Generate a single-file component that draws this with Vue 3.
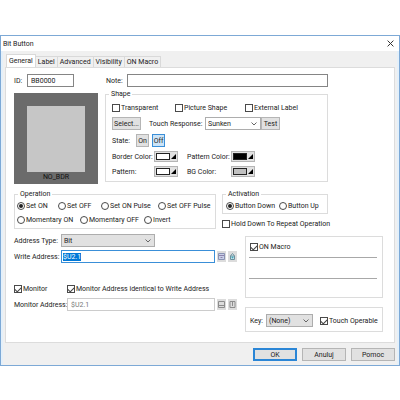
<script setup>
import { onMounted, ref } from 'vue'

const tabs = ['General', 'Label', 'Advanced', 'Visibility', 'ON Macro']
const activeTab = ref('General')
const operation = ref('Set ON')
const activation = ref('Button Down')
const state = ref('Off')
const operationRows = [
  ['Set ON', 'Set OFF', 'Set ON Pulse', 'Set OFF Pulse'],
  ['Momentary ON', 'Momentary OFF', 'Invert'],
]
const colorRows = [
  [{ label: 'Border Color:', tone: 'white' }, { label: 'Pattern Color:', tone: 'black' }],
  [{ label: 'Pattern:', tone: 'white' }, { label: 'BG Color:', tone: 'silver' }],
]
const writeAddress = ref(null)

onMounted(() => {
  writeAddress.value.focus()
  writeAddress.value.select()
})
</script>

<template>
  <main class="dialog">
    <header class="title-bar">
      <h1>Bit Button</h1>
      <button class="close" type="button" aria-label="Close">
        <svg viewBox="0 0 7 7"><path d="M.6.6 6.4 6.4M6.4.6.6 6.4" /></svg>
      </button>
    </header>

    <div class="content">
      <nav class="tabs">
        <button
          v-for="tab in tabs"
          :key="tab"
          type="button"
          class="tab"
          :class="{ active: tab === activeTab }"
          @click="activeTab = tab"
        >{{ tab }}</button>
      </nav>

      <section class="panel">
        <div class="identity">
          <label class="field id-field">ID:<input class="box" type="text" value="BB0000" /></label>
          <label class="field note-field">Note:<input class="box" type="text" /></label>
        </div>

        <div class="appearance">
          <div class="preview"><div class="face"></div><span>NO_BDR</span></div>
          <fieldset class="shape">
            <legend>Shape</legend>
            <div class="shape-rows">
              <div class="row checks">
                <label class="tick"><input type="checkbox" />Transparent</label>
                <label class="tick"><input type="checkbox" />Picture Shape</label>
                <label class="tick"><input type="checkbox" />External Label</label>
              </div>
              <div class="row response">
                <button class="btn select-btn" type="button">Select...</button>
                <label for="touch">Touch Response:</label>
                <div class="combo plain">
                  <select id="touch"><option>Sunken</option></select>
                  <svg viewBox="0 0 6 4"><path d="M.5.5 3 3 5.5.5" /></svg>
                </div>
                <button class="btn test-btn" type="button">Test</button>
              </div>
              <div class="row state">
                <span class="state-label">State:</span>
                <button
                  v-for="s in ['On', 'Off']"
                  :key="s"
                  type="button"
                  class="btn toggle"
                  :class="{ on: s === state }"
                  @click="state = s"
                >{{ s }}</button>
              </div>
              <div v-for="(row, i) in colorRows" :key="i" class="row colors">
                <template v-for="c in row" :key="c.label">
                  <span>{{ c.label }}</span>
                  <button class="btn swatch" type="button" :aria-label="c.label">
                    <i :class="c.tone"></i>
                    <svg viewBox="0 0 5 5"><path d="M5 0V5H0Z" /></svg>
                  </button>
                </template>
              </div>
            </div>
          </fieldset>
        </div>

        <div class="behaviour">
          <fieldset class="operation">
            <legend>Operation</legend>
            <div class="operation-rows">
              <div v-for="(row, i) in operationRows" :key="i" class="row radios" :class="'line-' + i">
                <label v-for="o in row" :key="o" class="tick">
                  <input v-model="operation" type="radio" name="operation" :value="o" />{{ o }}
                </label>
              </div>
            </div>
          </fieldset>
          <div class="activation-column">
            <fieldset class="activation">
              <legend>Activation</legend>
              <div class="row activation-row">
                <label v-for="a in ['Button Down', 'Button Up']" :key="a" class="tick">
                  <input v-model="activation" type="radio" name="activation" :value="a" />{{ a }}
                </label>
              </div>
            </fieldset>
            <label class="tick hold"><input type="checkbox" />Hold Down To Repeat Operation</label>
          </div>
        </div>

        <div class="lower">
          <div class="addresses">
            <div class="row address">
              <label for="type">Address Type:</label>
              <div class="combo type">
                <select id="type"><option>Bit</option></select>
                <svg viewBox="0 0 6 4"><path d="M.5.5 3 3 5.5.5" /></svg>
              </div>
            </div>
            <div class="row address">
              <label for="write">Write Address:</label>
              <input id="write" ref="writeAddress" class="box focused" type="text" value="$U2.1" />
              <button class="tool" type="button" aria-label="Keypad">
                <svg viewBox="0 0 9 11">
                  <path class="blue-face" d="M1.5 2.5h6v6h-6z" />
                  <path class="blue-line" d="M2 4.5h5M3.5 6.5h2" />
                </svg>
              </button>
              <button class="tool" type="button" aria-label="Tag">
                <svg viewBox="0 0 9 11">
                  <path class="teal-line" d="M2.5 5 4.5 2.5 6.5 5M2.5 5v3.5h4V5z" />
                  <path class="teal-face" d="M3.5 5.5h2v2h-2z" />
                </svg>
              </button>
            </div>
            <div class="row monitor">
              <label class="tick"><input type="checkbox" checked />Monitor</label>
              <label class="tick"><input type="checkbox" checked />Monitor Address identical to Write Address</label>
            </div>
            <div class="row address monitor-address">
              <label for="monitor">Monitor Address:</label>
              <input id="monitor" class="box" type="text" value="$U2.1" disabled />
              <button class="tool" type="button" aria-label="Monitor keypad" disabled>
                <svg viewBox="0 0 9 11">
                  <path class="gray-line" d="M1.5 2.5h6v6h-6zM2 6.5h5" />
                </svg>
              </button>
              <button class="tool" type="button" aria-label="Monitor tag" disabled>
                <svg viewBox="0 0 9 11">
                  <path class="gray-line" d="M2 2.5h5v6H2zM4.5 3v4" />
                </svg>
              </button>
            </div>
          </div>

          <div class="side">
            <div class="macro">
              <label class="tick"><input type="checkbox" checked />ON Macro</label>
              <hr /><hr />
            </div>
            <div class="key">
              <label for="key">Key:</label>
              <div class="combo key-combo">
                <select id="key"><option>(None)</option></select>
                <svg viewBox="0 0 6 4"><path d="M.5.5 3 3 5.5.5" /></svg>
              </div>
              <label class="tick"><input type="checkbox" checked />Touch Operable</label>
            </div>
          </div>
        </div>
      </section>

      <footer class="actions">
        <button class="btn default" type="button">OK</button>
        <button class="btn" type="button">Anuluj</button>
        <button class="btn" type="button">Pomoc</button>
      </footer>
    </div>
  </main>
</template>

<style>
body { background: #fff; }
</style>

<style scoped>
.dialog, .dialog * { box-sizing: border-box; }
.dialog {
  margin-top: 35px;
  border: 1px solid #7da9d6;
  background: #f0f0f0;
  color: #222;
  font: 7px/8px Roboto, "Liberation Sans", sans-serif;
  white-space: nowrap;
}
button, input, select { font: inherit; color: inherit; margin: 0; border-radius: 0; }
button { padding: 0; cursor: default; }
svg { display: block; fill: none; stroke: #333; }

.title-bar { display: flex; align-items: center; justify-content: space-between; height: 15px; padding: 0 5px 0 2px; background: #fff; }
h1 { margin: 0; font: inherit; }
.close { border: 0; background: none; }
.close svg { width: 7px; height: 7px; }

.content { border: solid #e4f0fa; border-width: 0 2px; }
.tabs { display: flex; align-items: flex-end; height: 16px; padding-left: 3px; }
.tab { height: 11px; padding: 0 2px; border: 1px solid #d9d9d9; border-width: 1px 1px 0 0; background: #f0f0f0; }
.tab.active { height: 13px; border-left-width: 1px; background: #fff; }

.panel { margin: 0 2px; padding: 6px 11px 10px 8px; border: 1px solid #dcdcdc; background: #fff; }
.field { display: flex; align-items: center; }
.identity { display: flex; padding-right: 55px; }
.id-field { width: 60px; justify-content: space-between; margin-right: 32px; }
.id-field .box { width: 47px; }
.note-field { flex: 1; gap: 4px; }
.note-field .box { flex: 1; }
.box { height: 13px; min-width: 0; padding: 0 3px; border: 1px solid #858585; background: #fff; outline: 0; }
.box:disabled { border-color: #ccc; color: #777; }
.focused { padding: 0 1px; border-color: #3a8fd8; }
.focused::selection { background: #0078d7; color: #fff; }

.appearance { display: flex; gap: 7px; margin-top: 3px; padding-right: 55px; }
.preview { display: flex; flex-direction: column; align-items: center; justify-content: space-between; width: 84px; height: 91px; margin-top: 3px; padding: 13px 0 3px; background: #6b6b6b; color: #111; }
.face { width: 58px; height: 66px; background: #c6c6c6; }

fieldset { min-width: 0; margin: 0; padding: 0; border: 1px solid #dcdcdc; }
legend { margin-left: 3px; padding: 0 2px; }
.row { display: flex; align-items: center; }
.shape { flex: 1; height: 92px; }
.shape-rows { display: flex; flex-direction: column; gap: 4px; padding: 5px 6px 4px; }
.checks { display: grid; grid-template-columns: 63px 70px 1fr; height: 10px; }

.tick { display: flex; align-items: center; gap: 1px; }
.tick input { appearance: none; display: grid; place-items: center; flex: none; width: 8px; height: 8px; border: 1px solid #4a4a4a; background: #fff; }
.tick input[type="radio"] { border-radius: 50%; }
.tick input[type="radio"]:checked::before { content: ""; width: 4px; height: 4px; border-radius: 50%; background: #222; }
.tick input[type="checkbox"]:checked::before { content: ""; width: 5px; height: 3px; border: solid #444; border-width: 0 0 1px 1px; transform: rotate(-45deg); }

.btn { height: 13px; border: 1px solid #b5b5b5; background: #e1e1e1; }
.select-btn { width: 29px; margin-right: 8px; }
.response label { width: 56px; }
.combo { display: flex; align-items: center; position: relative; height: 13px; border: 1px solid #adadad; background: #e1e1e1; }
.combo select { appearance: none; width: 100%; height: 11px; padding: 0 2px; border: 0; background: none; outline: 0; }
.combo svg { position: absolute; right: 3px; width: 6px; height: 4px; pointer-events: none; stroke: #666; }
.plain { width: 56px; background: #fff; }
.test-btn { width: 19px; }
.state-label { width: 24px; }
.toggle { width: 13px; margin-right: 3px; }
.toggle.on { border-color: #3a8fd8; background: #cce4f7; }
.colors { display: grid; grid-template-columns: 42px 33px 44px 24px; height: 11px; }
.swatch { display: flex; align-items: center; justify-content: space-between; width: 24px; height: 11px; padding: 0 1px; }
.swatch i { width: 14px; height: 7px; border: 1px solid #222; }
.white { background: #fff; }
.black { background: #000; }
.silver { background: #c0c0c0; }
.swatch svg { width: 5px; height: 5px; fill: #000; stroke: none; }

.behaviour { display: flex; gap: 6px; margin-top: 6px; }
.operation { width: 202px; height: 39px; }
.operation-rows { display: flex; flex-direction: column; gap: 4px; padding: 3px 2px; }
.radios { display: grid; height: 10px; }
.line-0 { grid-template-columns: 41px 43px 57px 1fr; }
.line-1 { grid-template-columns: 63px 64px 1fr; }
.activation-column { display: flex; flex-direction: column; gap: 5px; width: 106px; }
.activation { height: 24px; }
.activation-row { display: grid; grid-template-columns: 53px 1fr; height: 10px; margin: 3px 3px 0; }
.hold { height: 10px; }

.lower { display: flex; gap: 8px; margin-top: 5px; }
.addresses { flex: none; width: 223px; }
.address { height: 13px; margin-bottom: 3px; }
.address label { flex: none; width: 47px; }
.type { width: 94px; }
.address .box { flex: 1; }
.tool { width: 9px; height: 11px; margin-left: 2px; border: 0; background: #dcdcdc; }
.tool svg { width: 9px; height: 11px; }
.blue-face { fill: #c9d0e8; stroke: #8b93b3; }
.blue-line { stroke: #8d83ad; }
.teal-line { fill: #eef6f8; stroke: #6b8f9c; }
.teal-face { fill: #3fa5bb; stroke: none; }
.gray-line { stroke: #8c8c8c; }
.monitor { display: grid; grid-template-columns: 53px 1fr; height: 10px; margin: 21px 0 4px; }
.monitor-address label { width: 53px; }

.side { flex: 1; min-width: 0; display: flex; flex-direction: column; gap: 9px; margin-top: 2px; }
.macro { height: 62px; padding: 5px 5px 0 3px; border: 1px solid #dcdcdc; }
.macro .tick { height: 10px; padding-left: 1px; }
hr { height: 1px; margin: 5px 0 20px; border: 0; background: #a8a8a8; }
hr + hr { margin: 0; }
.key { display: flex; align-items: center; height: 25px; padding: 2px 4px 0; border: 1px solid #dcdcdc; }
.key-combo { width: 47px; margin: 0 7px 0 3px; }

.actions { display: flex; justify-content: flex-end; gap: 5px; padding: 5px 2px 4px; }
.actions .btn { width: 44px; }
.actions .default { border: 2px solid #2b86d6; }
</style>
